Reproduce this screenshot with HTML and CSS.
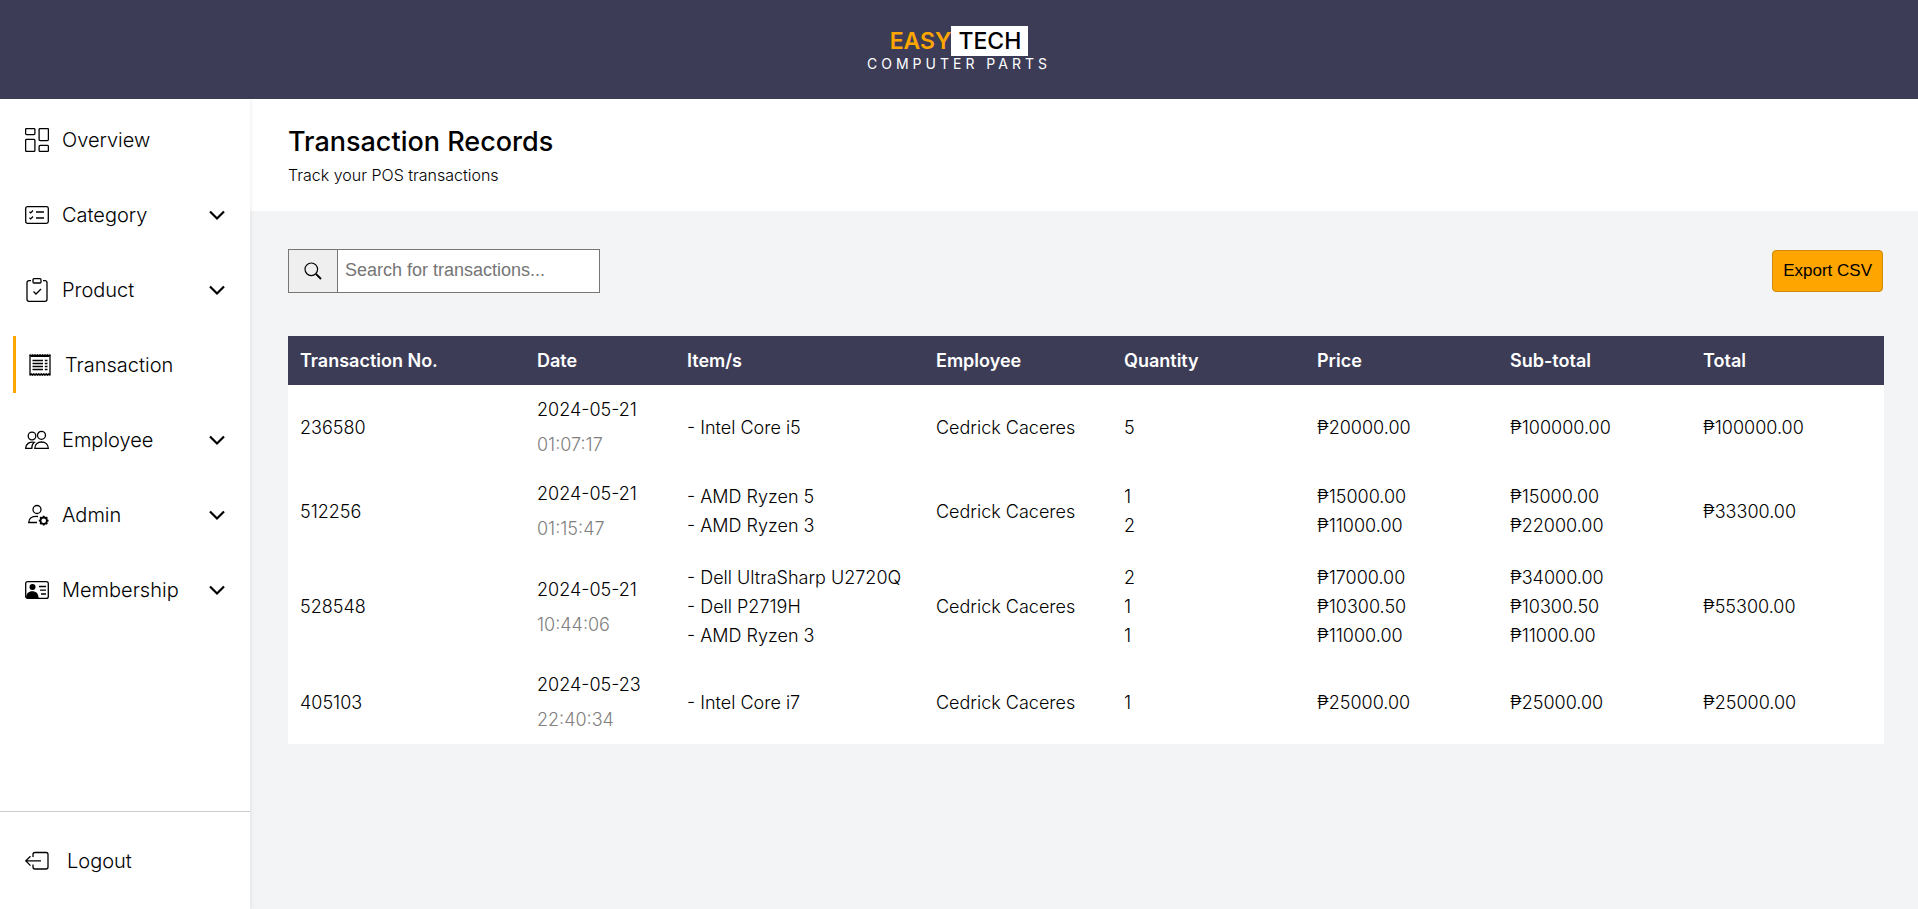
FILE: index.html
```html
<!DOCTYPE html>
<html lang="en">
<head>
<meta charset="utf-8">
<meta name="viewport" content="width=device-width, initial-scale=1">
<title>Transaction Records</title>
<link rel="stylesheet" href="styles.css">
</head>
<body>
<header class="topbar">
  <div class="brand"><span class="brand-easy">EASY</span><span class="brand-tech">TECH</span></div>
  <div class="brand-sub">COMPUTER PARTS</div>
</header>
<div class="shell">
  <aside class="sidebar">
    <nav class="menu">
      <a class="item" href="#overview">
        <svg class="icon" viewBox="0 0 24 24"><rect x=".6" y=".6" width="9.3" height="6" rx="1"/><rect x="14.1" y=".6" width="9.3" height="12" rx="1"/><rect x=".6" y="11.4" width="9.3" height="12" rx="1"/><rect x="14.1" y="17.4" width="9.3" height="6" rx="1"/></svg>
        <span>Overview</span>
      </a>
      <button class="item" type="button">
        <svg class="icon" viewBox="0 0 24 24"><rect x=".7" y="3.6" width="22.6" height="16.8" rx="1.8"/><path d="M11 9h8M11 15h8M4.5 8.8l1.2 1.1 2.3-2.4M4.5 14.8l1.2 1.1 2.3-2.4"/></svg>
        <span>Category</span>
        <svg class="chevron" viewBox="0 0 16 16"><path d="M1 4.500 8 11.500 15 4.500"/></svg>
      </button>
      <button class="item" type="button">
        <svg class="icon" viewBox="0 0 24 24"><path d="M6 2.700H4a2 2 0 0 0-2 2v16.600a2 2 0 0 0 2 2h16a2 2 0 0 0 2-2V4.700a2 2 0 0 0-2-2h-2M8.500 13.500l2.500 2.500 5-5"/><rect x="8" y=".7" width="8" height="4.300" rx="1"/></svg>
        <span>Product</span>
        <svg class="chevron" viewBox="0 0 16 16"><path d="M1 4.500 8 11.500 15 4.500"/></svg>
      </button>
      <a class="item active" href="#transaction" aria-current="page">
        <svg class="icon" viewBox="0 0 24 24"><path d="M2 1.500v21M22 1.500v21"/><path d="M2 2l1.250 1L4.500 2l1.250 1L7 2l1.250 1L9.500 2l1.250 1L12 2l1.250 1 1.250-1 1.250 1L17 2l1.250 1 1.250-1 1.250 1L22 2M2 22l1.250-1 1.250 1 1.250-1L7 22l1.250-1 1.250 1 1.250-1L12 22l1.250-1 1.250 1 1.250-1L17 22l1.250-1 1.250 1 1.250-1L22 22" stroke-width="1.700"/><path d="M4.500 7.500h10.500M4.500 10.500h10.500M4.500 13.500h10.500M4.500 16.500h10.500M16.800 7.500h2.700M16.800 10.500h2.700M16.800 13.500h2.700M16.800 16.500h2.700" stroke-width="1.500"/></svg>
        <span>Transaction</span>
      </a>
      <button class="item" type="button">
        <svg class="icon" viewBox="0 0 24 24"><circle cx="16.500" cy="7.300" r="4"/><circle cx="7" cy="8" r="3.800"/><path d="M9.800 20.300c0-4 2.800-6.300 6.700-6.300s6.800 2.300 6.800 6.300zM9.300 14.300c-5-.8-8.500 1.700-8.600 6h6.100c0-2.700.8-4.700 2.500-6z"/></svg>
        <span>Employee</span>
        <svg class="chevron" viewBox="0 0 16 16"><path d="M1 4.500 8 11.500 15 4.500"/></svg>
      </button>
      <button class="item" type="button">
        <svg class="icon" viewBox="0 0 24 24"><circle cx="12" cy="6.500" r="4"/><path d="M12 19.500H3.700c0-4 3-6.500 9.300-6"/><circle cx="18.700" cy="17.700" r="3.200" stroke-width="1.800"/><path d="M18.700 12.800v1.700M18.700 20.900v1.700M13.800 17.700h1.700M21.900 17.700h1.700M15.200 14.200l1.200 1.200M21 20l1.200 1.200M15.200 21.200l1.200-1.200M21 15.400l1.200-1.200" stroke-width="1.800"/></svg>
        <span>Admin</span>
        <svg class="chevron" viewBox="0 0 16 16"><path d="M1 4.500 8 11.500 15 4.500"/></svg>
      </button>
      <button class="item" type="button">
        <svg class="icon" viewBox="0 0 24 24"><rect x=".7" y="3.600" width="22.600" height="16.800" rx="2"/><path d="M14 8.500h7M15 12.200h6M16 16h5"/><g fill="currentColor" stroke="none"><circle cx="7.500" cy="9" r="3"/><path d="M1 20c.3-4.700 2.600-6.700 6.300-6.700s6 2 6.300 6.700z"/></g></svg>
        <span>Membership</span>
        <svg class="chevron" viewBox="0 0 16 16"><path d="M1 4.500 8 11.500 15 4.500"/></svg>
      </button>
    </nav>
    <div class="logout">
      <a class="logout-link" href="#logout">
        <svg class="icon" viewBox="0 0 24 24"><path d="M8 8V5.500a2 2 0 0 1 2-2h11a2 2 0 0 1 2 2v12.500a2 2 0 0 1-2 2H10a2 2 0 0 1-2-2v-2.500M16 11.900H.8M5.500 7.200.8 11.900l4.700 4.700"/></svg>
        <span>Logout</span>
      </a>
    </div>
  </aside>
  <main class="main">
    <section class="heading">
      <h1 class="title">Transaction Records</h1>
      <p class="subtitle">Track your POS transactions</p>
    </section>
    <section class="content">
      <div class="toolbar">
        <form class="search" role="search">
          <button class="search-button" type="button" aria-label="Search"><svg class="search-icon" viewBox="0 0 18 18"><circle cx="7.300" cy="7.300" r="6.300"/><path d="m12 12 5 5" stroke-width="1.800"/></svg></button>
          <input class="search-input" type="text" placeholder="Search for transactions..." aria-label="Search for transactions">
        </form>
        <button class="export" type="button">Export CSV</button>
      </div>
      <table class="records">
        <colgroup><col class="c-number"><col class="c-date"><col class="c-items"><col class="c-employee"><col class="c-amount"><col class="c-amount"><col class="c-amount"><col class="c-amount"></colgroup>
        <thead>
          <tr><th>Transaction No.</th><th>Date</th><th>Item/s</th><th>Employee</th><th>Quantity</th><th>Price</th><th>Sub-total</th><th>Total</th></tr>
        </thead>
        <tbody>
          <tr><td>236580</td><td>2024-05-21<div class="time">01:07:17</div></td><td>- Intel Core i5</td><td>Cedrick Caceres</td><td>5</td><td>₱20000.00</td><td>₱100000.00</td><td>₱100000.00</td></tr>
          <tr><td>512256</td><td>2024-05-21<div class="time">01:15:47</div></td><td>- AMD Ryzen 5<br>- AMD Ryzen 3</td><td>Cedrick Caceres</td><td>1<br>2</td><td>₱15000.00<br>₱11000.00</td><td>₱15000.00<br>₱22000.00</td><td>₱33300.00</td></tr>
          <tr><td>528548</td><td>2024-05-21<div class="time">10:44:06</div></td><td>- Dell UltraSharp U2720Q<br>- Dell P2719H<br>- AMD Ryzen 3</td><td>Cedrick Caceres</td><td>2<br>1<br>1</td><td>₱17000.00<br>₱10300.50<br>₱11000.00</td><td>₱34000.00<br>₱10300.50<br>₱11000.00</td><td>₱55300.00</td></tr>
          <tr><td>405103</td><td>2024-05-23<div class="time">22:40:34</div></td><td>- Intel Core i7</td><td>Cedrick Caceres</td><td>1</td><td>₱25000.00</td><td>₱25000.00</td><td>₱25000.00</td></tr>
        </tbody>
      </table>
    </section>
  </main>
</div>
</body>
</html>
```
FILE: styles.css
```css
* { box-sizing: border-box; }
body {
  margin: 0;
  min-height: 100vh;
  display: flex;
  flex-direction: column;
  font-family: Inter, "Liberation Sans", sans-serif;
  font-weight: 300;
  color: #000;
  background: #f3f4f6;
}
.topbar {
  position: relative;
  z-index: 2;
  display: flex;
  flex-direction: column;
  align-items: center;
  padding: 26px 0 28px;
  background: #3c3c57;
  color: #fff;
}
.brand {
  display: flex;
  font-size: 23px;
  line-height: 30px;
}
.brand-easy { color: #ffa500; font-weight: 600; }
.brand-tech { padding: 0 7px; background: #fff; color: #000; font-weight: 500; }
.brand-sub {
  font-size: 14px;
  line-height: 15px;
  font-weight: 400;
  letter-spacing: 4px;
}
.shell { flex: 1; display: flex; }
.sidebar {
  position: relative;
  z-index: 1;
  flex: none;
  width: 250px;
  display: flex;
  flex-direction: column;
  background: #fff;
  box-shadow: 0 0 5px rgba(0, 0, 0, .1);
}
.menu {
  display: flex;
  flex-direction: column;
  gap: 18px;
  padding: 12px 13px 0;
}
.item {
  display: flex;
  align-items: center;
  gap: 13px;
  height: 57px;
  padding: 0 12px;
  border: 0;
  background: none;
  font: inherit;
  font-size: 20px;
  color: #000;
  text-decoration: none;
}
.active { border-left: 3px solid #ffa500; }
.icon {
  flex: none;
  width: 24px;
  height: 24px;
  fill: none;
  stroke: currentColor;
  stroke-width: 1.3;
}
.chevron {
  width: 16px;
  height: 16px;
  margin-left: auto;
  fill: none;
  stroke: currentColor;
  stroke-width: 2.2;
}
.logout {
  margin-top: auto;
  padding: 37px 25px 36px;
  border-top: 1px solid #ccc;
}
.logout-link {
  display: flex;
  align-items: center;
  gap: 18px;
  font-size: 20px;
  line-height: 24px;
  color: #000;
  text-decoration: none;
}
.main { flex: 1; min-width: 0; }
.heading { padding: 26px 38px 25px; background: #fff; }
.title { margin: 0 0 6px; font-size: 27px; line-height: 34px; font-weight: 500; }
.subtitle { margin: 0; font-size: 16px; line-height: 21px; }
.content { padding: 38px 35px 38px 38px; }
.toolbar {
  display: flex;
  align-items: center;
  justify-content: space-between;
  margin-bottom: 43px;
}
.search { display: flex; width: 312px; height: 44px; }
.search-button {
  width: 50px;
  padding: 0;
  border: 1px solid #767676;
  background: #efefef;
  color: #000;
}
.search-icon {
  display: block;
  width: 18px;
  height: 18px;
  margin: 0 auto;
  fill: none;
  stroke: currentColor;
  stroke-width: 1.2;
}
.search-input {
  flex: 1;
  min-width: 0;
  padding: 0 7px 2px;
  border: 1px solid #767676;
  border-left: 0;
  background: #fff;
  font-family: "Liberation Sans", Arial, sans-serif;
  font-size: 18px;
}
.search-input::placeholder { color: #757575; }
.export {
  height: 42px;
  padding: 0 10px;
  border: 1px solid #d08a0c;
  border-radius: 4px;
  background: #ffa500;
  color: #000;
  font-family: "Liberation Sans", Arial, sans-serif;
  font-size: 17px;
}
.records {
  width: 100%;
  table-layout: fixed;
  border-collapse: collapse;
  background: #fff;
  font-size: 18px;
  line-height: 29px;
}
.records th, .records td { padding: 10px 12px; text-align: left; }
.records th { background: #3c3c57; color: #fff; font-weight: 600; }
.c-number { width: 237px; }
.c-date { width: 150px; }
.c-items { width: 249px; }
.c-employee { width: 188px; }
.c-amount { width: 193px; }
.time { margin-top: 6px; color: #808080; }
```
